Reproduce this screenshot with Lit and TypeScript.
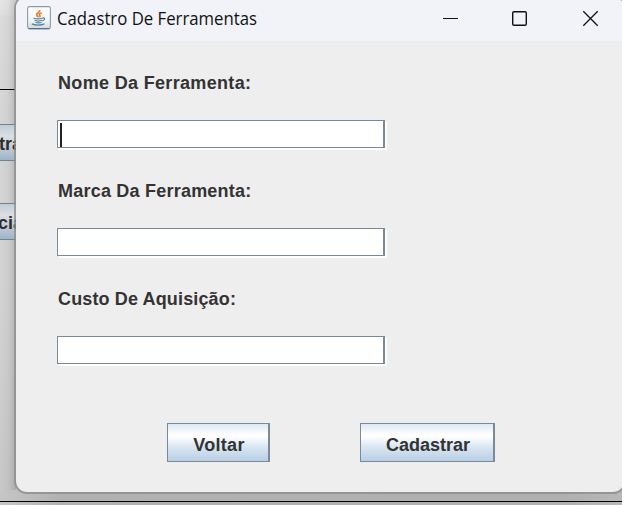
import { LitElement, html, css } from "lit";
import { customElement, property } from "lit/decorators.js";

@customElement("java-icon")
class JavaIcon extends LitElement {
  static styles = css`:host{display:block;width:24px;height:24px}svg{display:block}`;
  render() {
    return html`<svg width="24" height="24" viewBox="0 0 24 24" fill="none">
      <defs><linearGradient id="g" x1="0" y1="0" x2="0" y2="1"><stop offset="0" stop-color="#fff"/><stop offset=".6" stop-color="#f4f5f6"/><stop offset="1" stop-color="#d5dade"/></linearGradient></defs>
      <rect x=".6" y=".6" width="22.8" height="22" rx="1.8" fill="url(#g)" stroke="#8c9aa6" stroke-width="1.1"/>
      <path d="M1.5 22.600h21" stroke="#52738d" stroke-width="1.1"/>
      <path d="M12.800 4c.6 2.400-3.600 3-3.100 5 .2.900 1.300 1.400 1.500 2.400M14.700 6.900c-2.200.6-3 1.500-2 2.600.6.700.2 1.200-.4 1.600" stroke="#ec7c25" stroke-width="1.600"/>
      <path d="M6.500 12.200c2.500.8 7 .7 9.200 0M7.500 14.300c2 .8 5.500.8 7.500 0M8.500 16.200c1.800.7 4.300.7 6 0M4.800 17.900c3 1.500 9.500 1.500 12.600 0" stroke="#55819f" stroke-width="1.200"/>
      <path d="M15.500 12c2.900-.8 2.800 2.200-.3 3" stroke="#55819f" stroke-width="1.100"/>
    </svg>`;
  }
}

@customElement("form-field")
class FormField extends LitElement {
  @property() label = "";
  @property({ type: Boolean }) caret = false;
  static styles = css`
    :host{display:block;height:108px}
    .label{display:block;height:48px;margin-left:1px;font:bold 18px/22px "Liberation Sans",sans-serif;color:#333;white-space:nowrap}
    .box{box-sizing:border-box;width:328px;height:28px;background:#fff;border:1px solid #7a8a99;border-right-width:2px;box-shadow:2px 2px 0 #fff;padding:2px}
    .caret{width:2px;height:24px;background:#222}
  `;
  render() {
    return html`<span class="label">${this.label}</span>
      <div class="box">${this.caret ? html`<div class="caret"></div>` : ""}</div>`;
  }
}

@customElement("metal-button")
class MetalButton extends LitElement {
  static styles = css`
    :host{box-sizing:border-box;display:flex;justify-content:center;align-items:center;height:39px;border:1px solid #7a8a99;border-right-width:2px;
      background:linear-gradient(#dde8f3 0,#fff 30%,#fff 34%,#dce7f2 60%,#b8cfe5 100%);
      font:bold 18px/22px "Liberation Sans",sans-serif;color:#333;padding:4px 0 0 2px;white-space:nowrap}
  `;
  render() { return html`<slot></slot>`; }
}

@customElement("app-root")
class AppRoot extends LitElement {
  static styles = css`
    :host{display:block;position:relative;width:622px;height:505px;overflow:hidden;background:#c4c4c4}
    .behind{width:16px;height:505px;background:linear-gradient(90deg,#0000 0,#00000008 50%,#00000024 100%),linear-gradient(#e6e6e6 0,#e0e0e0 15px,#dcdcdc 16px,#d7d7d7 90px,#d3d3d3 300px,#c7c7c7 505px);position:relative}
    .rule{position:absolute;left:0;height:1px;background:#000}
    .top{top:89px;width:15px}
    .bottom{top:501px;width:622px}
    .shade{position:absolute;left:0;top:490px;width:622px;height:15px;background:linear-gradient(90deg,#c6c6c6,#b2b2b2 60px,#b0b0b0 560px,#b8b8b8)}
    .peek{position:absolute;box-sizing:border-box;left:0;width:30px;height:37px;border:solid #74818e;border-width:1px 0;
      background:linear-gradient(#c1cbd5,#dcdfe2 32%,#c5ced7 60%,#9fb4c8);font:bold 18px/38px "Liberation Sans",sans-serif;color:#2e2e2e;white-space:nowrap}
    .first{top:124px;text-indent:-1px}
    .second{top:203px;text-indent:-2px}
    .window{position:absolute;left:14px;top:-5px;box-sizing:border-box;width:612px;height:499px;border:2px solid #8c8c8cc8;border-radius:13px;background:#eee;background-clip:padding-box;overflow:hidden;display:flex;flex-direction:column}
    .bar{height:44px;flex:none;background:#f1f3f9;display:flex;align-items:center;box-sizing:border-box;padding-left:11px}
    java-icon{margin-bottom:2px}
    .title{margin:0 0 2px 6px;width:206px;font:17.5px/24px "Open Sans","Noto Sans",sans-serif;color:#111;white-space:nowrap}
    .title span{display:inline-block;transform:scaleX(.957);transform-origin:0 50%}
    .controls{margin-left:180px;flex:none}
    .body{padding:31px 0 0 41px}
    .nome{letter-spacing:.33px}
    .marca{letter-spacing:.22px}
    .custo{letter-spacing:.14px}
    .actions{display:flex;gap:90px;padding-left:110px;margin-top:27px}
    .back{width:103px;letter-spacing:.3px}
    .save{width:135px}
  `;
  render() {
    return html`
      <div class="behind">
        <div class="rule top"></div>
        <div class="peek first">tra</div>
        <div class="peek second">cia</div>
      </div>
      <div class="shade"></div><div class="rule bottom"></div>
      <div class="window">
        <div class="bar">
          <java-icon></java-icon>
          <div class="title"><span>Cadastro De Ferramentas</span></div>
          <svg class="controls" width="156" height="24" viewBox="443 7 156 24" fill="none" stroke="#111">
            <path d="M443 18.500h15"/>
            <rect x="512.700" y="11.700" width="13.600" height="13.600" rx="1.200" stroke-width="1.400"/>
            <path d="M583.300 11.300l14.400 14.400M597.700 11.300l-14.400 14.400" stroke-width="1.300"/>
          </svg>
        </div>
        <div class="body">
          <form-field class="nome" label="Nome Da Ferramenta:" caret></form-field>
          <form-field class="marca" label="Marca Da Ferramenta:"></form-field>
          <form-field class="custo" label="Custo De Aquisição:"></form-field>
          <div class="actions">
            <metal-button class="back">Voltar</metal-button>
            <metal-button class="save">Cadastrar</metal-button>
          </div>
        </div>
      </div>`;
  }
}
